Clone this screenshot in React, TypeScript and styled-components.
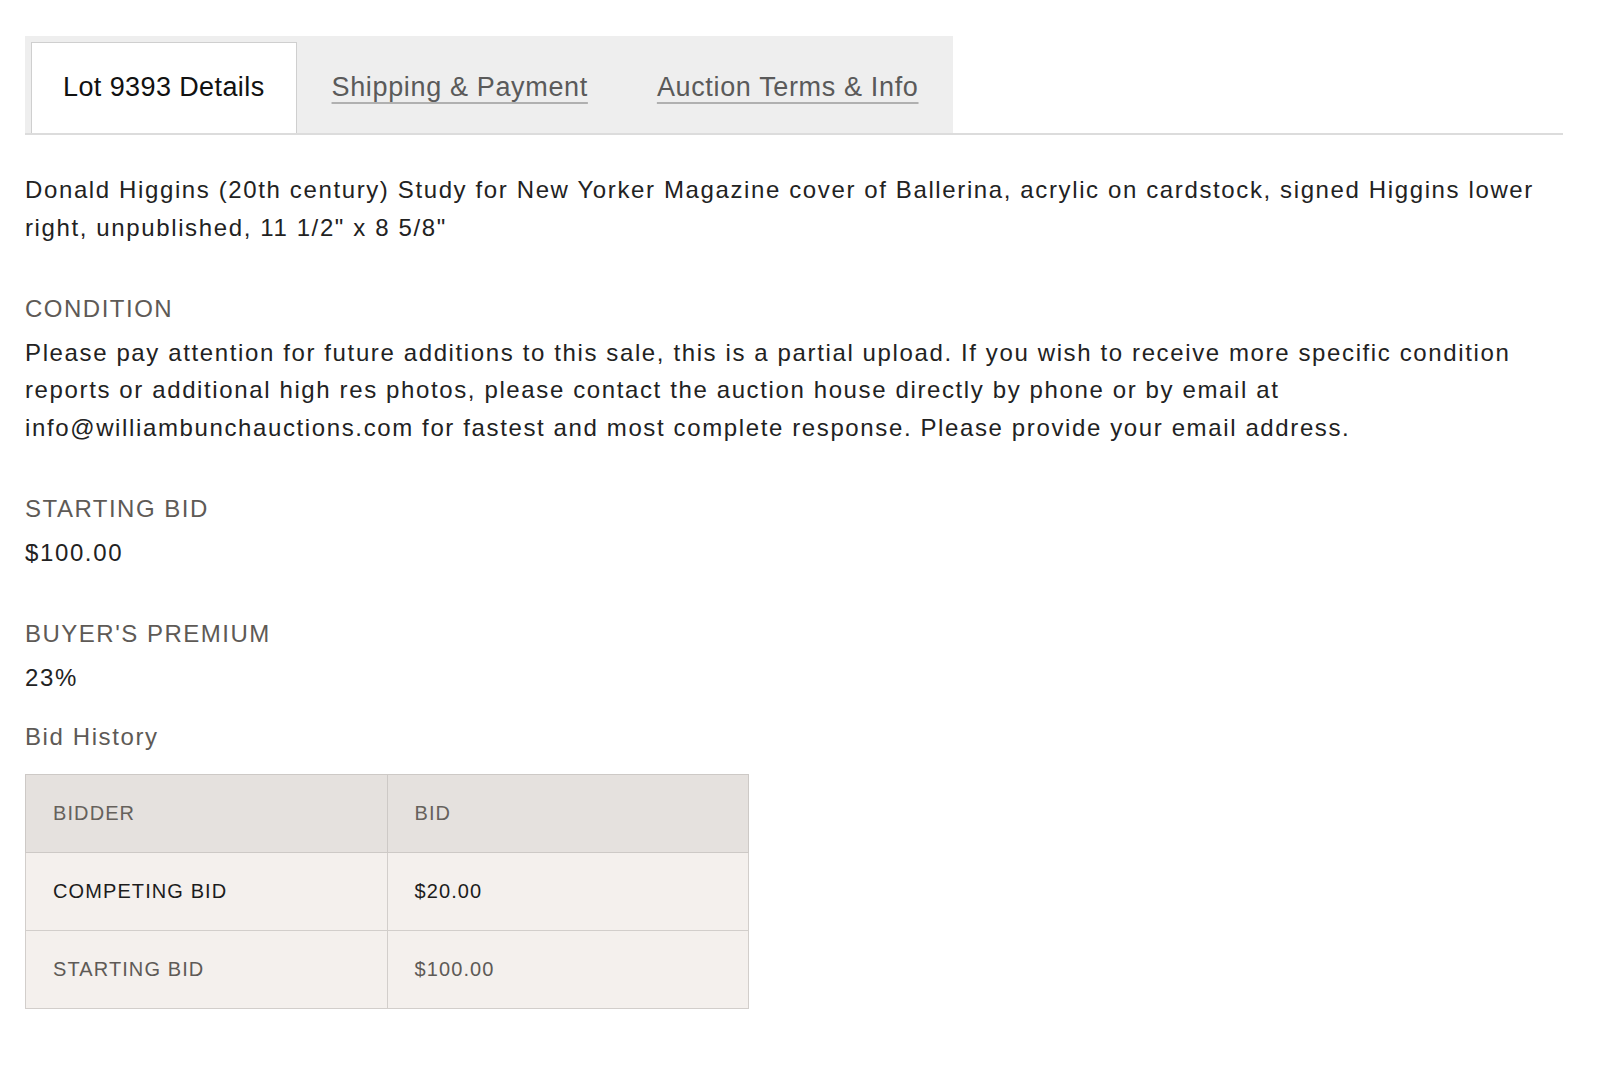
import { createGlobalStyle, styled } from 'styled-components';

const GlobalStyle = createGlobalStyle`
  body {
    margin: 0;
    background: #fff;
    font-family: "Liberation Sans", Arial, sans-serif;
    color: #222;
  }
`;

type Tab = { label: string; active?: boolean };

const tabs: Tab[] = [
  { label: 'Lot 9393 Details', active: true },
  { label: 'Shipping & Payment' },
  { label: 'Auction Terms & Info' },
];

const bids = [
  { bidder: 'COMPETING BID', amount: '$20.00', current: true },
  { bidder: 'STARTING BID', amount: '$100.00', current: false },
];

const App = () => {
  return (
    <>
      <GlobalStyle />
      <S.Page>
        <S.TabRow>
          <S.TabList>
            {tabs.map(tab => (
              <S.Tab key={tab.label} $active={!!tab.active}>
                <S.TabLabel $active={!!tab.active}>{tab.label}</S.TabLabel>
              </S.Tab>
            ))}
          </S.TabList>
        </S.TabRow>

        <S.Content>
          <S.Text>
            Donald Higgins (20th century) Study for New Yorker Magazine cover of Ballerina, acrylic on
            cardstock, signed Higgins lower right, unpublished, 11 1/2" x 8 5/8"
          </S.Text>

          <S.Section>
            <S.Heading>CONDITION</S.Heading>
            <S.Text>
              Please pay attention for future additions to this sale, this is a partial upload. If you
              wish to receive more specific condition reports or additional high res photos, please
              contact the auction house directly by phone or by email at
              info@williambunchauctions.com for fastest and most complete response. Please provide
              your email address.
            </S.Text>
          </S.Section>

          <S.Section>
            <S.Heading>STARTING BID</S.Heading>
            <S.Text>$100.00</S.Text>
          </S.Section>

          <S.Section>
            <S.Heading>BUYER'S PREMIUM</S.Heading>
            <S.Text>23%</S.Text>
          </S.Section>

          <S.HistoryTitle>Bid History</S.HistoryTitle>
          <S.Table>
            <thead>
              <tr>
                <S.HeadCell>BIDDER</S.HeadCell>
                <S.HeadCell>BID</S.HeadCell>
              </tr>
            </thead>
            <tbody>
              {bids.map(bid => (
                <tr key={bid.bidder}>
                  <S.Cell $current={bid.current}>{bid.bidder}</S.Cell>
                  <S.Cell $current={bid.current}>{bid.amount}</S.Cell>
                </tr>
              ))}
            </tbody>
          </S.Table>
        </S.Content>
      </S.Page>
    </>
  );
};

export default App;

const S = {
  Page: styled.div`
    padding: 36px 37px 30px 25px;
  `,
  TabRow: styled.div`
    border-bottom: 2px solid #dcdcdc;
  `,
  TabList: styled.div`
    display: inline-flex;
    box-sizing: border-box;
    background: #eeeeee;
    padding: 6px 0 0 6px;
    height: 97px;
  `,
  Tab: styled.div<{ $active: boolean }>`
    display: flex;
    align-items: center;
    justify-content: center;
    box-sizing: border-box;
    padding: ${p => (p.$active ? '0 31px 2px' : '0 33px 2px 34px')};
    background: ${p => (p.$active ? '#fff' : 'transparent')};
    border: 1px solid ${p => (p.$active ? '#cfcfcf' : 'transparent')};
    border-bottom: none;
  `,
  TabLabel: styled.span<{ $active: boolean }>`
    font-size: 27px;
    letter-spacing: ${p => (p.$active ? '0.4px' : '0.65px')};
    color: ${p => (p.$active ? '#111' : '#5a5a5a')};
    text-decoration: ${p => (p.$active ? 'none' : 'underline')};
    text-decoration-color: #b0b0b0;
    text-decoration-thickness: 2px;
    text-underline-offset: 6px;
  `,
  Content: styled.div`
    padding-top: 36px;
  `,
  Section: styled.div`
    margin-top: 43px;
  `,
  Heading: styled.div`
    font-size: 24px;
    line-height: 38px;
    letter-spacing: 1.5px;
    color: #5e5a56;
    margin-bottom: 6px;
  `,
  Text: styled.p`
    margin: 0;
    font-size: 24px;
    line-height: 37.8px;
    letter-spacing: 1.62px;
    color: #222;
  `,
  HistoryTitle: styled.div`
    margin-top: 21px;
    font-size: 24px;
    line-height: 38px;
    letter-spacing: 1.6px;
    color: #5e5a56;
  `,
  Table: styled.table`
    margin-top: 18px;
    width: 724px;
    border-collapse: collapse;
    border: 1px solid #d6d2cf;
  `,
  HeadCell: styled.th`
    width: 50%;
    height: 78px;
    box-sizing: border-box;
    padding: 0 27px;
    text-align: left;
    font-weight: normal;
    font-size: 20px;
    letter-spacing: 1.1px;
    color: #66615c;
    background: #e5e1de;
    border: 1px solid #cdc9c6;
  `,
  Cell: styled.td<{ $current: boolean }>`
    height: 78px;
    box-sizing: border-box;
    padding: 0 27px;
    font-size: 20px;
    letter-spacing: 1.1px;
    color: ${p => (p.$current ? '#1c1c1c' : '#5e5a56')};
    background: #f4f0ed;
    border: 1px solid #d2cecb;
  `,
};
